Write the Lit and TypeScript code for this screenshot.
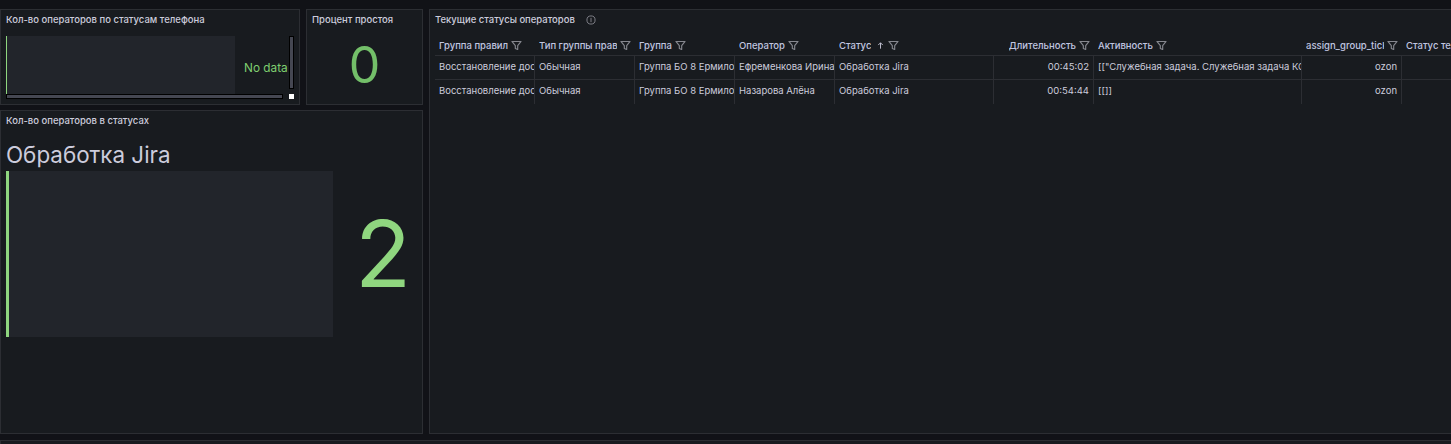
import { LitElement, html, css } from "lit";
import { customElement } from "lit/decorators.js";

const filterIcon = html`<svg class="filter" viewBox="0 0 12 12" fill="none" stroke="#85878e" stroke-width="1.25" stroke-linejoin="round"><path d="M1 1.6h10L7.3 6.2v4.2L4.7 9.2V6.2z"/></svg>`;

interface Col { title: string; w: number; right?: boolean; sort?: boolean; }
const cols: Col[] = [
  { title: "Группа правил", w: 100 },
  { title: "Тип группы прав", w: 100 },
  { title: "Группа", w: 100 },
  { title: "Оператор", w: 100 },
  { title: "Статус", w: 159, sort: true },
  { title: "Длительность", w: 100, right: true },
  { title: "Активность", w: 208 },
  { title: "assign_group_ticket", w: 100, right: true },
  { title: "Статус телефона", w: 100 },
];
const rows: string[][] = [
  ["Восстановление доступа", "Обычная", "Группа БО 8 Ермилова", "Ефременкова Ирина", "Обработка Jira", "00:45:02", "[[\"Служебная задача. Служебная задача КС", "ozon", ""],
  ["Восстановление доступа", "Обычная", "Группа БО 8 Ермилова", "Назарова Алёна", "Обработка Jira", "00:54:44", "[[]]", "ozon", ""],
];

@customElement("app-root")
export class AppRoot extends LitElement {
  static styles = css`
    :host { display: block; width: 1451px; height: 444px; overflow: hidden; background: #111217; font-family: Inter, "Noto Sans", sans-serif; color: #ccccdc; }
    .grid { display: grid; grid-template-columns: 300px 117px 1030px; grid-template-rows: 96px 324px 20px; column-gap: 6px; row-gap: 5px; padding-top: 9px; width: 1465px; }
    .panel { background: #181b1f; border: 1px solid #2c2e33; box-sizing: border-box; overflow: hidden; min-width: 0; }
    .title { font-size: 9.5px; font-weight: 500; color: #ccccdc; line-height: 12px; white-space: nowrap; padding: 4px 0 0 5px; }
    .phone { grid-column: 1; grid-row: 1; }
    .phone-body { display: grid; grid-template-columns: 229px 54px 6px 5px; grid-template-rows: 58px 5px; margin: 10px 0 0 5px; }
    .bar-bg { background: #22252b; border-left: 1px solid #8fd67f; }
    .nodata { color: #7fcf70; font-size: 11.8px; align-self: center; padding: 6px 0 0 9px; white-space: nowrap; line-height: 16px; }
    .vscroll { background: #454752; border: 1px solid #000; box-sizing: border-box; height: 53px; width: 5px; }
    .hscroll { grid-column: 1 / 3; background: #454752; border: 1px solid #000; box-sizing: border-box; height: 5px; width: 277px; }
    .corner { grid-column: 3; grid-row: 2; width: 5px; height: 5px; background: #fff; }
    .idle { grid-column: 2; grid-row: 1; }
    .idle .value { text-align: center; color: #73bf69; font-size: 50px; line-height: 58px; margin-top: 10px; font-weight: 400; }
    .states { grid-column: 1 / 3; grid-row: 2; }
    .state-name { font-size: 22.4px; line-height: 27px; margin: 14px 0 0 5px; color: #ccccdc; }
    .state-row { display: flex; margin: 3px 0 0 5px; }
    .state-bar { width: 327px; height: 166px; box-sizing: border-box; background: #22252b; border-left: 3px solid #8fd67f; }
    .state-value { flex: 1; text-align: center; color: #8fd67f; font-size: 92px; line-height: 166px; padding-left: 11px; }
    .table-panel { grid-column: 3; grid-row: 1 / 3; }
    .table-title { display: flex; align-items: center; gap: 11px; padding-left: 5px; }
    .table-title .title { padding-left: 0; }
    .info { width: 10px; height: 10px; margin-top: 4px; }
    .table { margin: 0 0 0 5px; padding-top: 10px; }
    .row { display: flex; height: 24px; border-bottom: 1px solid #2c2e33; box-sizing: border-box; }
    .row.body:last-child { border-bottom: none; }
    .row.head { height: 20px; }
    .hcell { display: flex; align-items: center; box-sizing: border-box; padding: 0 4px; font-size: 9.5px; font-weight: 500; color: #c0c6e0; overflow: hidden; white-space: nowrap; flex: none; }
    .hcell.right { justify-content: flex-end; }
    .hname { overflow: hidden; white-space: nowrap; min-width: 0; }
    .arrow { width: 9px; height: 9px; margin-left: 5px; flex: none; }
    .filter { width: 11px; height: 11px; flex: none; margin-left: 3px; }
    .cell { box-sizing: border-box; padding: 0 4px; font-size: 9.5px; color: #ccccdc; line-height: 21px; overflow: hidden; white-space: nowrap; flex: none; border-right: 1px solid #2c2e33; }
    .cell.right { text-align: right; }
    .cell:last-child { border-right: none; }
    .bottom { grid-column: 1 / 4; grid-row: 3; margin-top: 1px; }
  `;

  render() {
    return html`<div class="grid">
      <section class="panel phone">
        <div class="title">Кол-во операторов по статусам телефона</div>
        <div class="phone-body">
          <div class="bar-bg"></div>
          <div class="nodata">No data</div>
          <div class="vscroll"></div>
          <div></div>
          <div class="hscroll"></div>
          <div class="corner"></div>
        </div>
      </section>
      <section class="panel idle">
        <div class="title">Процент простоя</div>
        <div class="value">0</div>
      </section>
      <section class="panel table-panel">
        <div class="table-title">
          <div class="title">Текущие статусы операторов</div>
          <svg class="info" viewBox="0 0 12 12" fill="none" stroke="#85878e" stroke-width="1.1"><circle cx="6" cy="6" r="4.9"/><path d="M6 3.4v5.2"/></svg>
        </div>
        <div class="table">
          <div class="row head">
            ${cols.map(c => html`<div class="hcell ${c.right ? "right" : ""}" style="width:${c.w}px">
              <span class="hname">${c.title}</span>
              ${c.sort ? html`<svg class="arrow" viewBox="0 0 10 10" fill="none" stroke="#ccccdc" stroke-width="1"><path d="M5 8.5V2M2.5 4.5 5 2l2.5 2.5"/></svg>` : ""}
              ${filterIcon}
            </div>`)}
          </div>
          ${rows.map(r => html`<div class="row body">
            ${r.map((v, i) => html`<div class="cell ${cols[i].right ? "right" : ""}" style="width:${cols[i].w}px">${v}</div>`)}
          </div>`)}
        </div>
      </section>
      <section class="panel states">
        <div class="title">Кол-во операторов в статусах</div>
        <div class="state-name">Обработка Jira</div>
        <div class="state-row">
          <div class="state-bar"></div>
          <div class="state-value">2</div>
        </div>
      </section>
      <section class="panel bottom"></section>
    </div>`;
  }
}
